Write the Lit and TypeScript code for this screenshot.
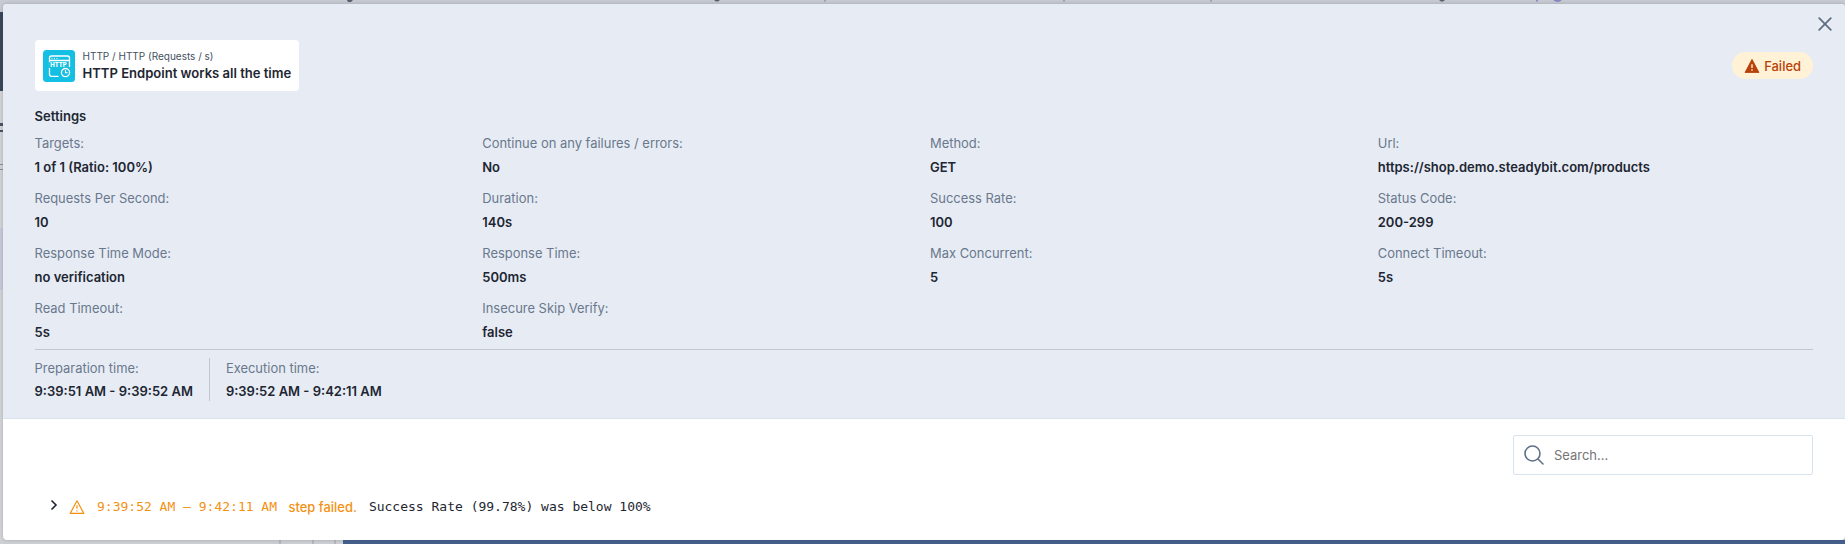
import { LitElement, html, css } from "lit";
import { customElement } from "lit/decorators.js";

const SETTINGS: [string, string][] = [
  ["Targets:", "1 of 1 (Ratio: 100%)"],
  ["Continue on any failures / errors:", "No"],
  ["Method:", "GET"],
  ["Url:", "https://shop.demo.steadybit.com/products"],
  ["Requests Per Second:", "10"],
  ["Duration:", "140s"],
  ["Success Rate:", "100"],
  ["Status Code:", "200-299"],
  ["Response Time Mode:", "no verification"],
  ["Response Time:", "500ms"],
  ["Max Concurrent:", "5"],
  ["Connect Timeout:", "5s"],
  ["Read Timeout:", "5s"],
  ["Insecure Skip Verify:", "false"],
];

@customElement("app-root")
export class AppRoot extends LitElement {
  static styles = css`
    :host {
      display: block;
      position: relative;
      width: 100%;
      height: 544px;
      overflow: hidden;
      box-sizing: border-box;
      padding: 4px 0 4px 3px;
      background: #c9ccd4;
      font-family: Inter, sans-serif;
      font-size: 12.95px;
      line-height: 20px;
      color: #1d2632;
    }
    * { box-sizing: border-box; }
    svg { display: block; flex: none; }
    .backdrop { position: absolute; inset: 0; width: 100%; height: 100%; }
    .dialog {
      position: relative;
      display: flex;
      flex-direction: column;
      height: 536px;
      border-radius: 4px;
      overflow: hidden;
      background: #fff;
      box-shadow: 0 0 4px rgba(30, 40, 60, 0.25);
    }
    .head {
      position: relative;
      height: 415px;
      padding: 36px 32px 0 31.5px;
      background: #e7ecf4;
      border-bottom: 1px solid #d9e3ee;
    }
    .close { position: absolute; top: 13px; right: 13px; }
    .top { display: flex; justify-content: space-between; align-items: center; }
    .step {
      display: flex;
      align-items: center;
      gap: 8px;
      height: 51px;
      padding: 0 8px;
      background: #fff;
      border-radius: 4px;
    }
    .words { margin-top: -2px; }
    .kind { font-size: 10px; line-height: 16px; color: #42505f; }
    .name { font-size: 13.05px; font-weight: 600; line-height: 18px; }
    .status {
      display: flex;
      align-items: center;
      gap: 4px;
      height: 27px;
      padding: 0 12px;
      border-radius: 14px;
      background: #fff2d6;
      color: #b7410a;
      font-weight: 500;
    }
    .title { margin-top: 15px; font-size: 13.05px; font-weight: 600; }
    .grid {
      display: grid;
      grid-template-columns: repeat(4, 1fr);
      column-gap: 12.5px;
      row-gap: 8px;
      margin-top: 6px;
    }
    .label { line-height: 23.5px; color: #6a788d; }
    .value { font-size: 13px; line-height: 23.5px; font-weight: 600; }
    .times { display: flex; margin-top: 5px; border-top: 1px solid #c0c7d4; padding-top: 8px; }
    .time + .time { margin-left: 16px; padding-left: 16px; border-left: 1px solid #c0c7d4; }
    .time { height: 43px; }
    .time .label { line-height: 21px; }
    .time .value { line-height: 25px; }
    .body { flex: 1; padding: 16px 32px 0; }
    .search {
      display: flex;
      align-items: center;
      gap: 10px;
      width: 300px;
      height: 40px;
      margin-left: auto;
      padding: 0 10px;
      border: 1px solid #d9e3ee;
      border-radius: 2px;
      color: #757575;
    }
    .log { display: flex; align-items: center; height: 24px; margin-top: 20px; padding-left: 15px; }
    .mono { font-family: "DejaVu Sans Mono", monospace; font-size: 13px; white-space: pre; }
    .warn { color: #f49113; }
    .chevron { margin: -5px 11px 0 0; }
    .alert { margin-right: 12px; }
    .failed { margin: 0 12px 0 11.5px; font-weight: 500; }
  `;

  render() {
    return html`
      <svg class="backdrop" viewBox="0 0 1845 544" preserveAspectRatio="none">
        <rect y="12" width="3" height="79" fill="#39465a" />
        <rect y="91" width="3" height="453" fill="#d5d6d9" />
        <path d="M0 123h3v3H0zM0 130h3v2H0z" fill="#4b5260" />
        <path d="M0 164h3v1H0zM0 169h3v1H0z" fill="#8b909a" />
        <rect y="228" width="3" height="62" fill="#cccbdc" />
        <rect y="540" width="343" height="4" fill="#cfd1d5" />
        <path d="M280 540v4M313 540v4M335 540v4" stroke="#b4b9c4" stroke-width="2" />
        <rect x="343" y="540" width="1502" height="4" fill="#46618e" />
        <path d="M347 0h6l-2 2h-3zM714 0h6l-2 1.500h-2zM1439 0h6l-2 1.500h-2z" fill="#5a6070" />
        <path d="M825 0v1.500M1064 0v1.500M1211 0v1.500" stroke="#8d929f" stroke-width="1.500" />
        <path d="M1537 0v1.500M1554 0q4 2 7 0" stroke="#8a85c4" stroke-width="1.800" fill="none" />
      </svg>
      <div class="dialog">
        <div class="head">
          <svg class="close" width="14" height="14" viewBox="0 0 14 14" fill="none" stroke="#5f6e84" stroke-width="1.8" stroke-linecap="round"><path d="M1.200 1.200l11.600 11.600M12.800 1.200L1.200 12.800" /></svg>
          <div class="top">
            <div class="step">
              <svg width="32" height="32" viewBox="0 0 32 32" fill="none">
                <rect width="32" height="32" rx="3.5" fill="#13bfe2" />
                <path d="M15.500 26.300H8.500q-2 0-2-2V8q0-2 2-2h16q2 0 2 2v9M7 10.500h19" stroke="#fff" stroke-width="1.300" />
                <path d="M8.500 8.400h1M11 8.400h1M13.500 8.400h1" stroke="#fff" stroke-width="1" />
                <rect x="5.500" y="12.200" width="19" height="5.800" fill="#13bfe2" />
                <text x="7.200" y="17.300" font-family="Inter, sans-serif" font-size="5.700" font-weight="800" textLength="16.500" lengthAdjust="spacingAndGlyphs" fill="#fff">HTTP</text>
                <circle cx="22.500" cy="22.600" r="5.600" fill="#13bfe2" />
                <circle cx="22.500" cy="22.600" r="4.100" stroke="#fff" stroke-width="1.300" />
                <path d="M22.500 20v2.800h2.200" stroke="#fff" stroke-width="1.100" />
              </svg>
              <div class="words">
                <div class="kind">HTTP / HTTP (Requests / s)</div>
                <div class="name">HTTP Endpoint works all the time</div>
              </div>
            </div>
            <div class="status">
              <svg width="16" height="16" viewBox="0 0 16 16"><path d="M8 1.300L15 14.500H1z" fill="#b7410a" stroke="#b7410a" stroke-width=".8" stroke-linejoin="round" /><path d="M8 6.200v3.800M8 11.300v1.500" stroke="#fff2d6" stroke-width="1.400" /></svg>
              <span>Failed</span>
            </div>
          </div>
          <div class="title">Settings</div>
          <div class="grid">
            ${SETTINGS.map(([k, v]) => html`<div><div class="label">${k}</div><div class="value">${v}</div></div>`)}
          </div>
          <div class="times">
            <div class="time"><div class="label">Preparation time:</div><div class="value">9:39:51 AM - 9:39:52 AM</div></div>
            <div class="time"><div class="label">Execution time:</div><div class="value">9:39:52 AM - 9:42:11 AM</div></div>
          </div>
        </div>
        <div class="body">
          <div class="search">
            <svg width="20" height="20" viewBox="0 0 20 20" fill="none" stroke="#60718a" stroke-width="1.600" stroke-linecap="round"><circle cx="8.500" cy="8.500" r="7.500" /><path d="M14 14l5 5" /></svg>
            <span>Search...</span>
          </div>
          <div class="log">
            <svg class="chevron" width="8" height="12" viewBox="0 0 8 12" fill="none" stroke="#1d2632" stroke-width="1.600"><path d="M1.500 1.500L6 6l-4.500 4.500" /></svg>
            <svg class="alert warn" width="16" height="16" viewBox="0 0 16 16" fill="none" stroke="currentColor" stroke-width="1.200" stroke-linejoin="round"><path d="M8 1.800L14.800 14.400H1.200zM8 6.200v3.600M8 11.200v1.400" /></svg>
            <span class="mono warn">9:39:52 AM – 9:42:11 AM</span>
            <span class="failed warn">step failed.</span>
            <span class="mono">Success Rate (99.78%) was below 100%</span>
          </div>
        </div>
      </div>
    `;
  }
}
